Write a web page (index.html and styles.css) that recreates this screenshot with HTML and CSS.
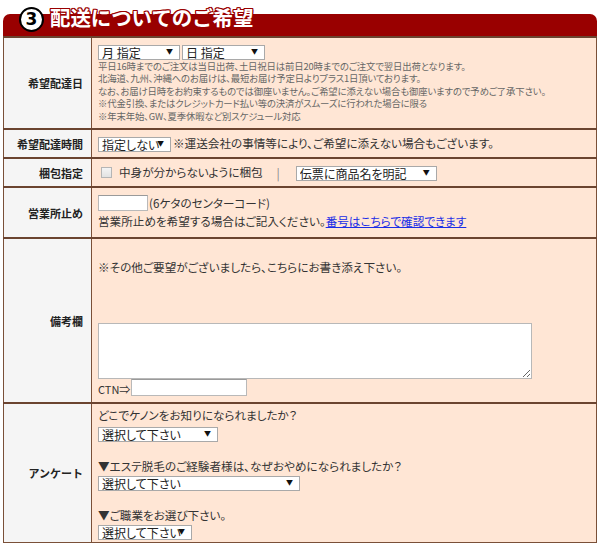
FILE: index.html
```html
<!DOCTYPE html>
<html lang="ja">
<head>
<meta charset="utf-8">
<title>配送についてのご希望</title>
<link rel="stylesheet" href="styles.css">
</head>
<body>
<section class="delivery">
  <h2 class="head">
    <span class="num">3</span>
    <span class="title">配送についてのご希望</span>
  </h2>
  <table class="form">
    <tr class="r-date">
      <th>希望配達日</th>
      <td>
        <div class="line">
          <span class="sel w82"><select><option>月 指定</option></select></span>
          <span class="sel w83"><select><option>日 指定</option></select></span>
        </div>
        <div class="notes">
          <p>平日16時までのご注文は当日出荷、土日祝日は前日20時までのご注文で翌日出荷となります。</p>
          <p>北海道、九州、沖縄へのお届けは、最短お届け予定日よりプラス1日頂いております。</p>
          <p>なお、お届け日時をお約束するものでは御座いません。ご希望に添えない場合も御座いますので予めご了承下さい。</p>
          <p>※代金引換、またはクレジットカード払い等の決済がスムーズに行われた場合に限る</p>
          <p>※年末年始、GW、夏季休暇など別スケジュール対応</p>
        </div>
      </td>
    </tr>
    <tr class="r-time">
      <th>希望配達時間</th>
      <td>
        <div class="line">
          <span class="sel w73"><select><option>指定しない</option></select></span><span class="txt">※運送会社の事情等により、ご希望に添えない場合もございます。</span>
        </div>
      </td>
    </tr>
    <tr class="r-pack">
      <th>梱包指定</th>
      <td>
        <div class="line">
          <label class="chk"><input type="checkbox"><span class="txt">中身が分からないように梱包</span></label>
          <span class="bar">|</span>
          <span class="sel w141"><select><option>伝票に商品名を明記</option></select></span>
        </div>
      </td>
    </tr>
    <tr class="r-office">
      <th>営業所止め</th>
      <td>
        <div class="line"><input class="inp code" type="text"><span class="txt">(6ケタのセンターコード)</span></div>
        <div class="line2 txt">営業所止めを希望する場合はご記入ください。<a href="#">番号はこちらで確認できます</a></div>
      </td>
    </tr>
    <tr class="r-note">
      <th>備考欄</th>
      <td>
        <p class="txt lead">※その他ご要望がございましたら、こちらにお書き添え下さい。</p>
        <textarea class="memo"></textarea>
        <div class="ctn"><span class="txt small">CTN⇒</span><input class="inp ctn-in" type="text"></div>
      </td>
    </tr>
    <tr class="r-survey">
      <th>アンケート</th>
      <td>
        <p class="txt q">どこでケノンをお知りになられましたか？</p>
        <span class="sel w120"><select><option>選択して下さい</option></select></span>
        <p class="txt q gap">▼エステ脱毛のご経験者様は、なぜおやめになられましたか？</p>
        <span class="sel w202"><select><option>選択して下さい</option></select></span>
        <p class="txt q gap">▼ご職業をお選び下さい。</p>
        <span class="sel w94"><select><option>選択して下さい</option></select></span>
      </td>
    </tr>
  </table>
</section>
</body>
</html>
```

FILE: styles.css
```css
* { box-sizing: border-box; }
html, body {
  margin: 0;
  padding: 0;
  background: #fff;
}
body {
  font-family: "Noto Sans CJK JP", "Noto Sans", sans-serif;
  color: #333;
  font-size: 12px;
}
.delivery {
  width: 594px;
  margin-left: 3px;
}
.head {
  margin: 14px 0 0;
  height: 22px;
  background: #990000;
  border-radius: 7px 7px 0 0;
  display: flex;
  align-items: flex-start;
  padding-left: 16px;
}
.num {
  margin-top: -7px;
  width: 25px;
  height: 25px;
  border-radius: 50%;
  background: #fff;
  border: 2.5px solid #000;
  color: #000;
  font-family: "DejaVu Sans", sans-serif;
  font-weight: bold;
  font-size: 17px;
  line-height: 20px;
  text-align: center;
}
.title {
  margin-top: -12px;
  margin-left: 6px;
  color: #fff;
  font-size: 20.5px;
  font-weight: bold;
  line-height: 30px;
  letter-spacing: -0.1px;
  text-shadow: 1px 0 0 #990000, -1px 0 0 #990000, 0 1px 0 #990000, 0 -1px 0 #990000,
               1px 1px 0 #990000, -1px -1px 0 #990000, 1px -1px 0 #990000, -1px 1px 0 #990000;
}
.form {
  width: 594px;
  border-collapse: collapse;
  border: 1px solid #7a5038;
  border-top: 2px solid #6b3f25;
}
.form th, .form td {
  border: 1px solid #7a5038;
  border-top: 2px solid #6b4430;
}
.form th {
  width: 88px;
  background: #f5f5f5;
  text-align: right;
  padding: 0 8px 0 0;
  font-size: 11px;
  font-weight: bold;
  color: #222;
  vertical-align: middle;
}
.form td {
  background: #ffe6d5;
  padding: 0 6px;
  vertical-align: top;
}
.txt {
  font-size: 11.6px;
  font-feature-settings: "palt";
  color: #333;
  line-height: 15px;
}
p { margin: 0; }

.sel {
  position: relative;
  display: inline-block;
  height: 15px;
  vertical-align: top;
}
.sel select {
  appearance: none;
  -webkit-appearance: none;
  width: 100%;
  height: 15px;
  margin: 0;
  padding: 0 10px 0 3px;
  border: 1px solid #a9a9a9;
  border-radius: 0;
  background: #fff;
  font-family: "Noto Sans CJK JP", sans-serif;
  font-size: 12px;
  line-height: 13px;
  color: #222;
  font-feature-settings: "palt";
}
.sel::after {
  content: "▼";
  position: absolute;
  right: 7px;
  top: 3px;
  font-size: 7px;
  line-height: 8px;
  color: #111;
  pointer-events: none;
}
.w82 { width: 82px; }
.w83 { width: 83px; }
.w73 { width: 73px; }
.w141 { width: 141px; }
.w120 { width: 120px; }
.w202 { width: 202px; }
.w94 { width: 94px; }

.line {
  display: flex;
  align-items: center;
  gap: 2px;
}
.r-date td { padding-top: 6px; padding-bottom: 6px; height: 91px; }
.notes { margin-top: 1px; }
.notes p {
  font-size: 9.4px;
  line-height: 12.4px;
  color: #666;
  letter-spacing: -0.15px;
  font-feature-settings: "palt";
  white-space: nowrap;
}
.r-time td, .r-pack td { height: 29px; vertical-align: middle; }
.chk { display: inline-flex; align-items: center; margin-left: 3px; }
.chk input {
  appearance: none;
  -webkit-appearance: none;
  width: 11px;
  height: 11px;
  margin: 0 7px 0 0;
  border: 1px solid #b5b5b5;
  background: linear-gradient(#f4f4f4, #e2e2e2);
}
.bar { color: #888; margin: 0 14px 0 12px; font-size: 12px; }

.r-office td { height: 51px; padding-top: 7px; }
.inp {
  height: 16px;
  margin: 0;
  border: 1px solid #b9b9b9;
  border-top-color: #9a9a9a;
  background: #fff;
  padding: 0 2px;
  font-size: 12px;
}
.code { width: 50px; margin-right: -1px; }
.line2 { margin-top: 3px; }
.line2 a { color: #1a2ee6; }

.r-note td { height: 165px; padding-top: 21px; }
.lead { margin-bottom: 48px; }
.memo {
  display: block;
  width: 434px;
  height: 56px;
  margin: 0;
  border: 1px solid #b8b8b8;
  background: #fff;
  resize: both;
}
.ctn { display: flex; align-items: flex-end; height: 17px; }
.small { font-size: 11px; line-height: 13px; }
.ctn-in { width: 116px; height: 17px; margin-left: 1px; }

.r-survey td { height: 139px; padding-top: 4px; }
.q { margin-bottom: 3px; }
.q.gap { margin-top: 16px; margin-bottom: 1px; }
```
